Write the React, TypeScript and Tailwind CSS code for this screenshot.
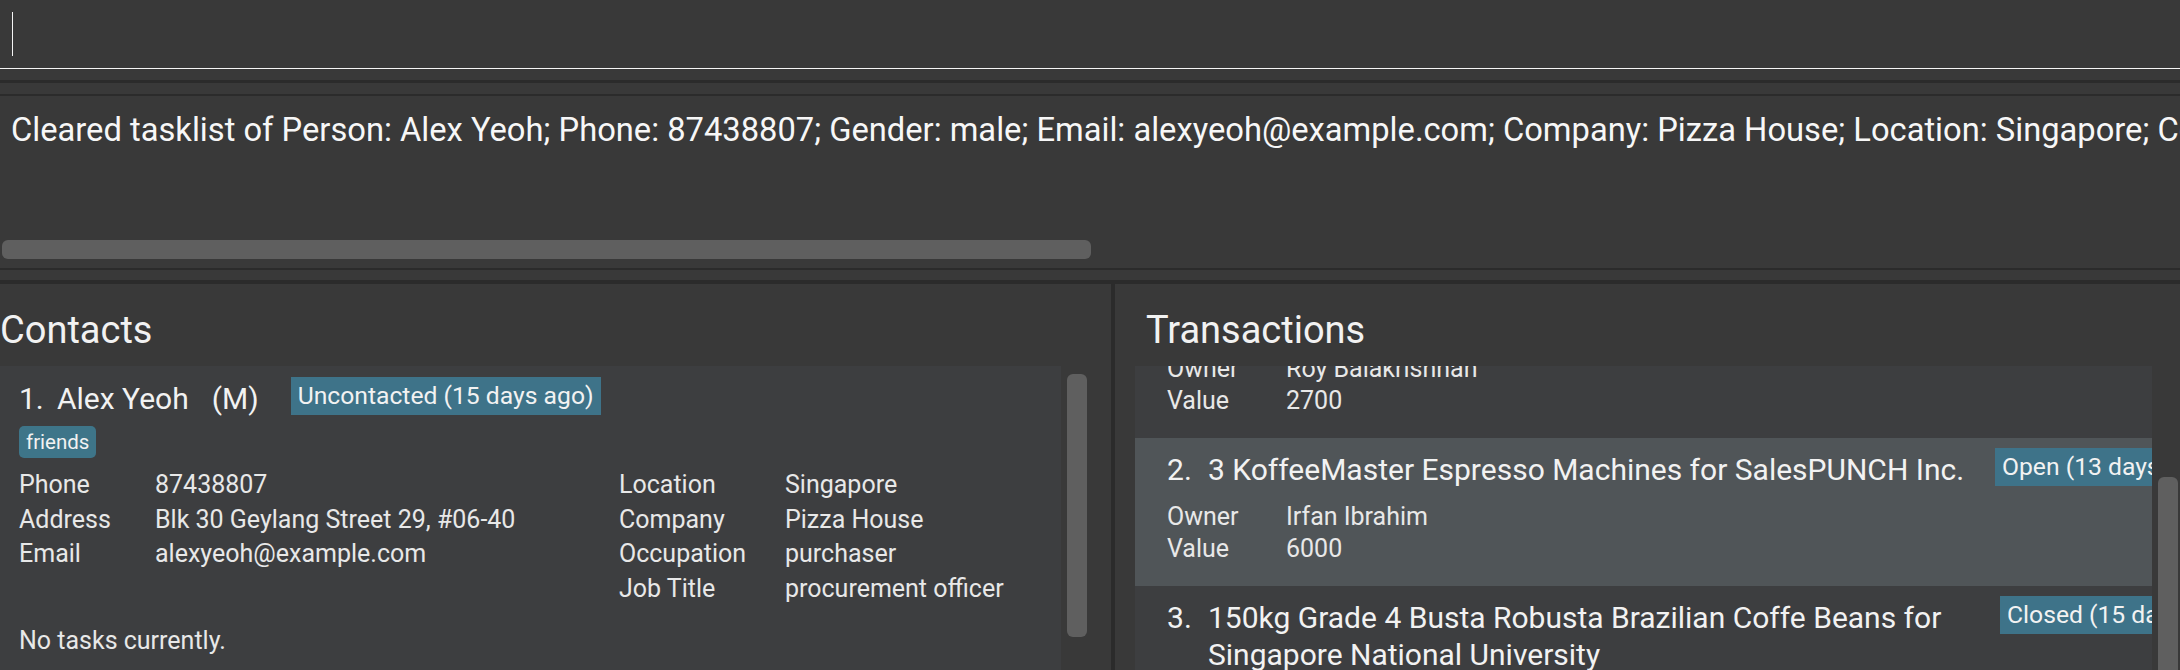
import React from "react";

const Badge = ({ children, className = "" }: { children: React.ReactNode; className?: string }) => (
  <div
    className={
      "shrink-0 h-[38px] px-[7px] bg-[#3e7389] text-[24.7px] leading-[38px] whitespace-nowrap text-[#f2f2f2] " +
      className
    }
  >
    {children}
  </div>
);

type Tx = {
  n: number;
  title: string;
  status: string;
  owner: string;
  value: string;
  selected?: boolean;
  badgeGap: string;
};

const TxItem = ({ t }: { t: Tx }) => (
  <div className={"pl-[32px] pt-[10px] pb-[21px] w-[1100px] " + (t.selected ? "bg-[#505558]" : "bg-[#3d3e40]")}>
    <div className="flex items-start">
      <div className="flex w-[808px] shrink-0 text-[30px] leading-[37px] pt-[3px] text-[#f2f2f2]">
        <div className="w-[41px] shrink-0">{t.n}.</div>
        <div className="flex-1">{t.title}</div>
      </div>
      <Badge className={t.badgeGap}>{t.status}</Badge>
    </div>
    <div className="mt-[13px] grid grid-cols-[119px_1fr] text-[25px] leading-[32px] text-[#e8e8e8]">
      <div>Owner</div>
      <div>{t.owner}</div>
      <div>Value</div>
      <div>{t.value}</div>
    </div>
  </div>
);

const txs: Tx[] = [
  {
    n: 1,
    title: "20 Boxes of Coffee Pods",
    status: "Closed (20 days ago)",
    owner: "Roy Balakrishnan",
    value: "2700",
    badgeGap: "ml-[20px]",
  },
  {
    n: 2,
    title: "3 KoffeeMaster Espresso Machines for SalesPUNCH Inc.",
    status: "Open (13 days ago)",
    owner: "Irfan Ibrahim",
    value: "6000",
    selected: true,
    badgeGap: "ml-[20px]",
  },
  {
    n: 3,
    title: "150kg Grade 4 Busta Robusta Brazilian Coffe Beans for Singapore National University",
    status: "Closed (15 days ago)",
    owner: "David Li",
    value: "4500",
    badgeGap: "ml-[25px]",
  },
];

export default function App() {
  return (
    <div className="w-[2180px] h-[670px] overflow-hidden bg-[#393939] font-['Roboto',sans-serif] text-[#f0f0f0] flex flex-col">
      {/* command box */}
      <div className="h-[68px] shrink-0 pl-[12px] pt-[12px]">
        <div className="w-[1px] h-[44px] bg-[#f5f5f5]" />
      </div>
      <div className="h-[1px] shrink-0 bg-[#f5f5f5]" />
      <div className="h-[11px] shrink-0" />
      <div className="h-[3px] shrink-0 bg-[#2b2b2b]" />
      <div className="h-[11px] shrink-0" />
      <div className="h-[2px] shrink-0 bg-[#2b2b2b]" />

      {/* result display */}
      <div className="h-[172px] shrink-0 flex flex-col">
        <div className="pt-[14px] pl-[11px] whitespace-nowrap overflow-hidden text-[32.7px] leading-[40px] text-[#f7f7f7]">
          Cleared tasklist of Person: Alex Yeoh; Phone: 87438807; Gender: male; Email: alexyeoh@example.com; Company:
          Pizza House; Location: Singapore; Contact status: Uncontacted (15 days ago); Occupation: purchaser; Job Title:
          procurement officer; Tags: [friends]
        </div>
        <div className="flex-1" />
        <div className="ml-[2px] mb-[9px] w-[1089px] h-[19px] rounded-[6px] bg-[#5f5f5f]" />
      </div>
      <div className="h-[2px] shrink-0 bg-[#2b2b2b]" />
      <div className="h-[10px] shrink-0" />
      <div className="h-[4px] shrink-0 bg-[#2b2b2b]" />

      {/* panels */}
      <div className="flex flex-1 min-h-0">
        {/* Contacts */}
        <div className="w-[1111px] shrink-0 flex flex-col">
          <div className="h-[82px] shrink-0 pt-[27px] text-[38px] leading-[38px] text-[#f2f2f2]">Contacts</div>
          <div className="flex flex-1 min-h-0">
            <div className="w-[1061px] shrink-0 bg-[#3d3e40] overflow-hidden">
              <div className="pl-[19px] pt-[11px]">
                <div className="flex items-start">
                  <div className="flex text-[30px] leading-[37px] pt-[3px] text-[#f2f2f2]">
                    <div className="w-[38px] shrink-0">1.</div>
                    <div>Alex Yeoh</div>
                    <div className="ml-[23px]">(M)</div>
                  </div>
                  <Badge className="ml-[32px]">Uncontacted (15 days ago)</Badge>
                </div>
                <div className="mt-[9px] flex">
                  <div className="h-[32px] px-[7px] rounded-[5px] bg-[#3e7589] text-[20.5px] leading-[32px] text-[#f2f2f2]">
                    friends
                  </div>
                </div>
                <div className="mt-[10px] flex text-[25px] leading-[34.5px] text-[#e8e8e8]">
                  <div className="w-[600px] shrink-0 grid grid-cols-[136px_1fr] content-start">
                    <div>Phone</div>
                    <div>87438807</div>
                    <div>Address</div>
                    <div>Blk 30 Geylang Street 29, #06-40</div>
                    <div>Email</div>
                    <div>alexyeoh@example.com</div>
                  </div>
                  <div className="grid grid-cols-[166px_1fr] content-start">
                    <div>Location</div>
                    <div>Singapore</div>
                    <div>Company</div>
                    <div>Pizza House</div>
                    <div>Occupation</div>
                    <div>purchaser</div>
                    <div>Job Title</div>
                    <div>procurement officer</div>
                  </div>
                </div>
                <div className="mt-[18px] text-[25px] leading-[34.5px] text-[#e8e8e8]">No tasks currently.</div>
              </div>
            </div>
            <div className="flex-1 pl-[6px] pt-[8px]">
              <div className="w-[20px] h-[263px] rounded-[6px] bg-[#5f5f5f]" />
            </div>
          </div>
        </div>

        {/* divider */}
        <div className="w-[4px] shrink-0 bg-[#2b2b2b]" />

        {/* Transactions */}
        <div className="flex-1 flex flex-col min-w-0">
          <div className="h-[82px] shrink-0 pl-[31px] pt-[27px] text-[38px] leading-[38px] text-[#f2f2f2]">
            Transactions
          </div>
          <div className="flex flex-1 min-h-0 pl-[20px]">
            <div className="w-[1017px] shrink-0 bg-[#3d3e40] overflow-hidden">
              <div className="-mt-[76px] flex flex-col">
                {txs.map((t) => (
                  <TxItem key={t.n} t={t} />
                ))}
              </div>
            </div>
            <div className="flex-1 pl-[6px] pt-[111px]">
              <div className="w-[20px] h-[300px] rounded-[6px] bg-[#5f5f5f]" />
            </div>
          </div>
        </div>
      </div>
    </div>
  );
}
